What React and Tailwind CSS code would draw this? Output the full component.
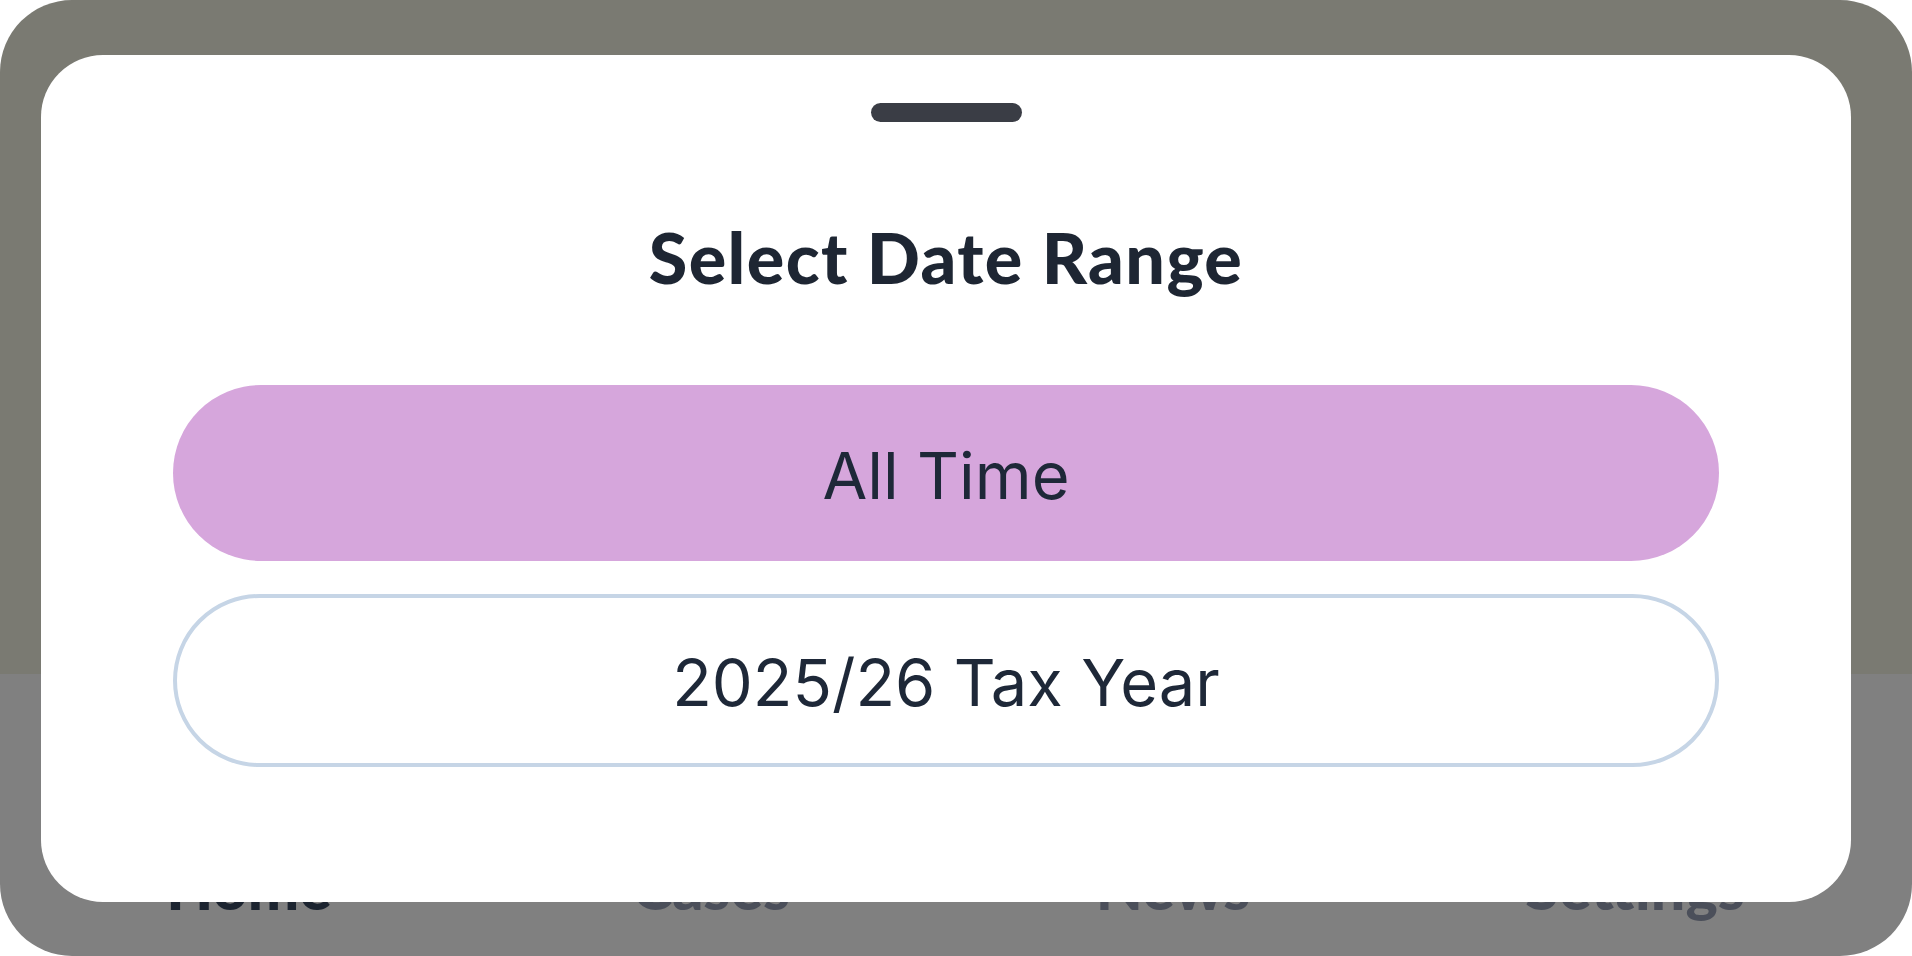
import React from 'react';

const navItems = [
  { label: 'Home', active: true },
  { label: 'Cases', active: false },
  { label: 'News', active: false },
  { label: 'Settings', active: false },
];

const ranges = [
  { label: 'All Time', selected: true },
  { label: '2025/26 Tax Year', selected: false },
];

const DateRangeSheet = () => {
  return (
    <div className="absolute left-[41px] top-[55px] w-[1810px] h-[847px] rounded-[62px] bg-white flex flex-col items-center pt-[48px]">
      <div className="h-[19px] w-[151px] rounded-full bg-[#3a3d45]" />
      <h2 className="mt-[100px] text-[70px] leading-none font-black tracking-[0.02em] text-[#1e2633] font-['Lato','Liberation_Sans',sans-serif]">
        Select Date Range
      </h2>
      <div className="w-full px-[132px] mt-[93px] flex flex-col gap-[33px]">
        {ranges.map((r) => (
          <button
            key={r.label}
            className={
              r.selected
                ? 'h-[176px] w-full rounded-full bg-[#d6a6dc] flex items-center justify-center pt-[4px]'
                : 'h-[173px] w-full rounded-full bg-white border-4 border-[#c6d5e6] flex items-center justify-center pt-[4px]'
            }
          >
            <span className="text-[65px] leading-none font-normal text-[#1e2838] font-['Inter','Liberation_Sans',sans-serif]">
              {r.label}
            </span>
          </button>
        ))}
      </div>
    </div>
  );
};

export default function App() {
  return (
    <div className="w-[1912px] h-[956px] bg-white relative overflow-hidden">
      <div className="w-full h-full rounded-[72px] overflow-hidden flex flex-col">
        <div className="flex-1 bg-[#7a7a72]" />
        <nav className="h-[282px] bg-[#808080] grid grid-cols-4 pl-[18px] pr-[46px] pt-[182px]">
          {navItems.map((n) => (
            <div key={n.label} className="flex justify-center">
              <span
                className={`text-[61px] leading-none font-black font-['Lato','Liberation_Sans',sans-serif] ${
                  n.active ? 'text-[#1c2430]' : 'text-[#4b4f5a]'
                }`}
              >
                {n.label}
              </span>
            </div>
          ))}
        </nav>
      </div>
      <DateRangeSheet />
    </div>
  );
}
